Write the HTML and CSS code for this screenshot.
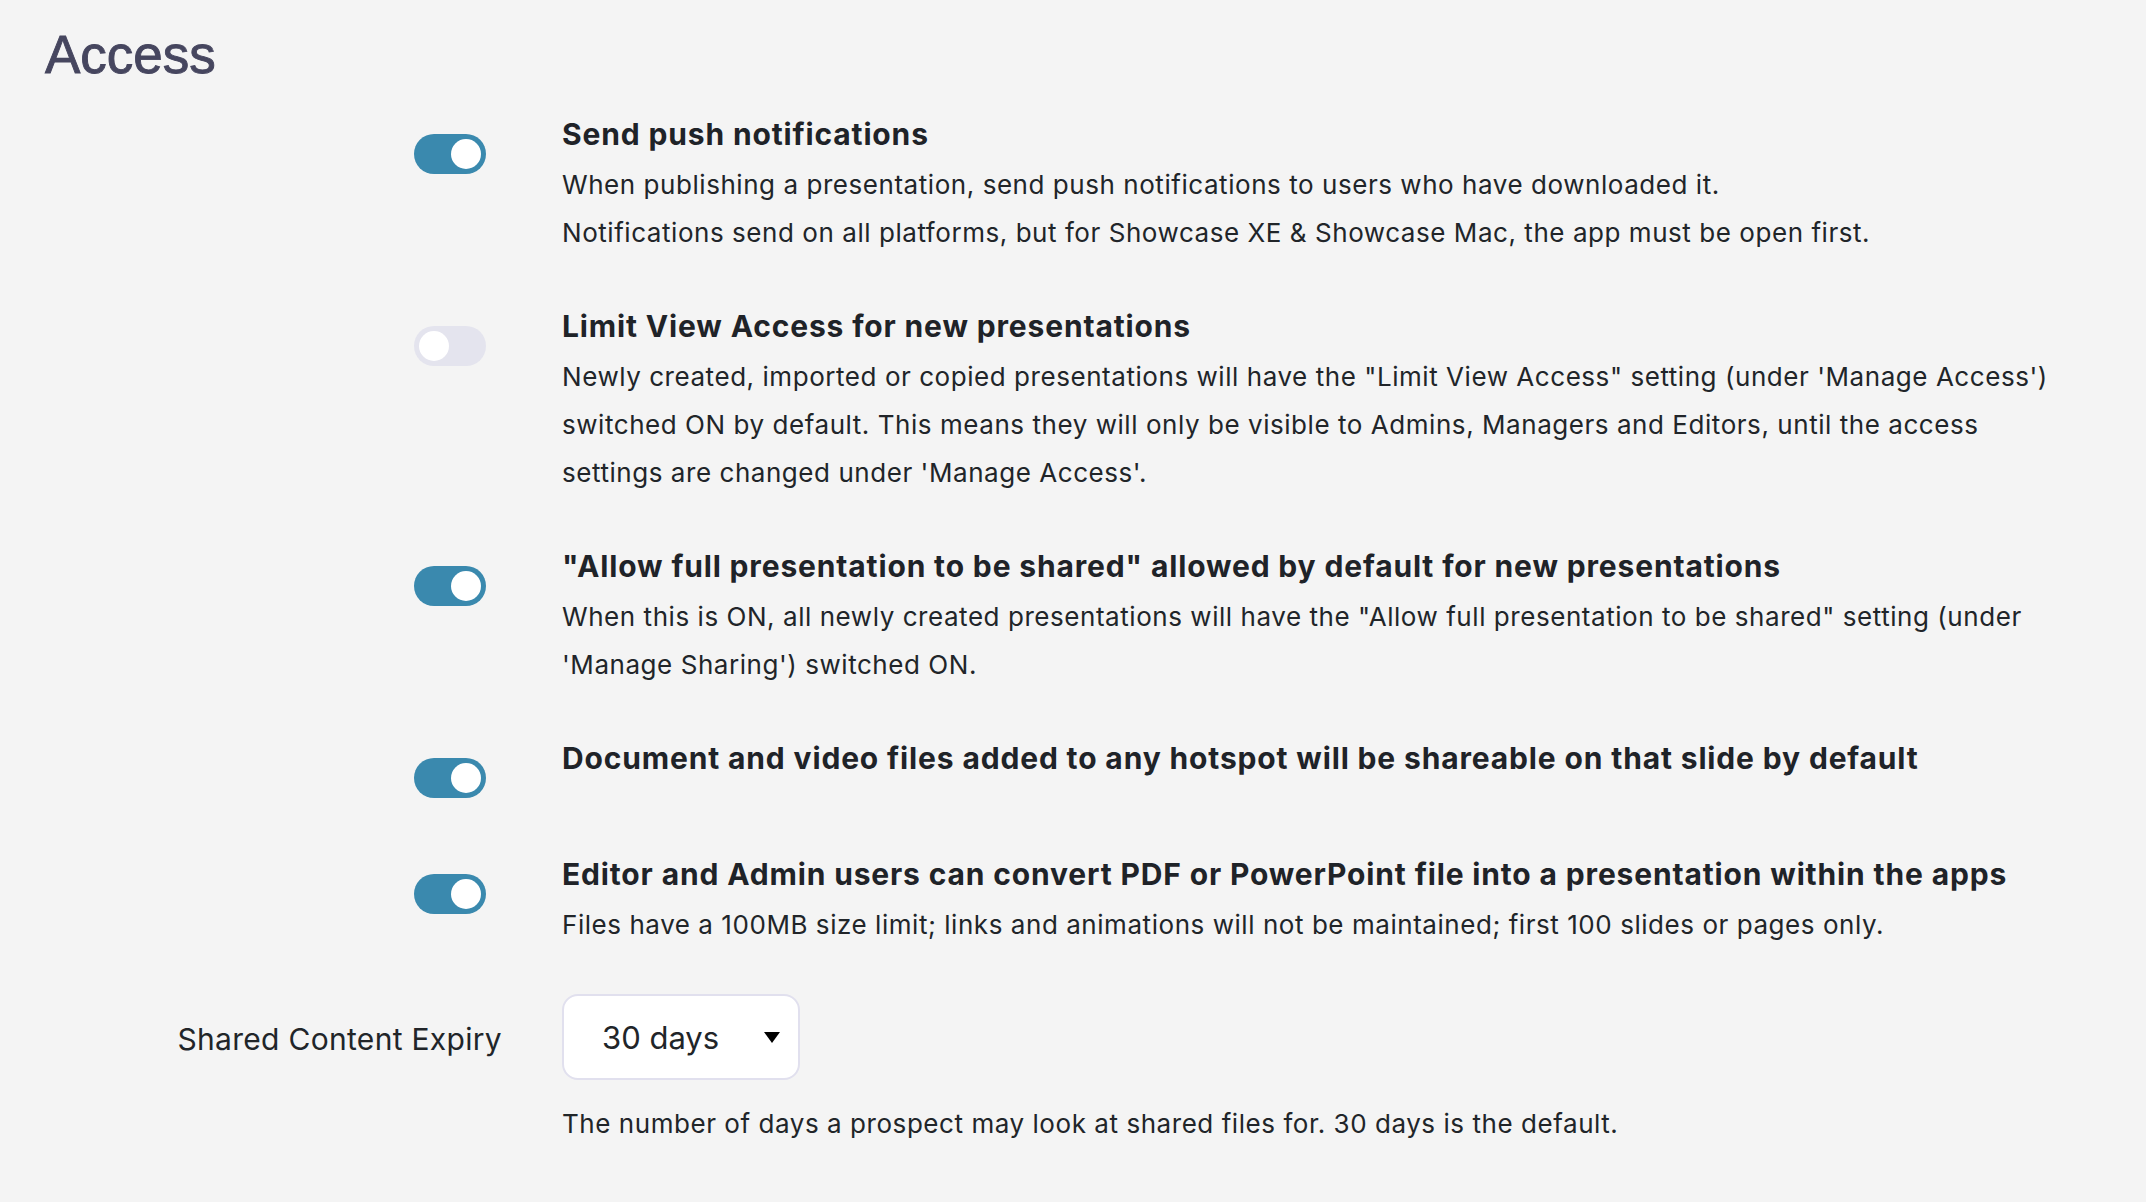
FILE: index.html
```html
<!DOCTYPE html>
<html lang="en">
<head>
<meta charset="utf-8">
<title>Access</title>
<link rel="stylesheet" href="styles.css">
</head>
<body>
<main class="page">
  <h1 class="title">Access</h1>
  <div class="settings">
    <div class="row">
      <div class="ctrl"><span class="toggle on"><span class="knob"></span></span></div>
      <div class="text">
        <h2 class="heading">Send push notifications</h2>
        <p class="desc">When publishing a presentation, send push notifications to users who have downloaded it.<br>Notifications send on all platforms, but for Showcase XE &amp; Showcase Mac, the app must be open first.</p>
      </div>
    </div>
    <div class="row">
      <div class="ctrl"><span class="toggle off"><span class="knob"></span></span></div>
      <div class="text">
        <h2 class="heading">Limit View Access for new presentations</h2>
        <p class="desc">Newly created, imported or copied presentations will have the "Limit View Access" setting (under 'Manage Access') switched ON by default. This means they will only be visible to Admins, Managers and Editors, until the access settings are changed under 'Manage Access'.</p>
      </div>
    </div>
    <div class="row">
      <div class="ctrl"><span class="toggle on"><span class="knob"></span></span></div>
      <div class="text">
        <h2 class="heading">"Allow full presentation to be shared" allowed by default for new presentations</h2>
        <p class="desc">When this is ON, all newly created presentations will have the "Allow full presentation to be shared" setting (under 'Manage Sharing') switched ON.</p>
      </div>
    </div>
    <div class="row row-short">
      <div class="ctrl"><span class="toggle on"><span class="knob"></span></span></div>
      <div class="text">
        <h2 class="heading">Document and video files added to any hotspot will be shareable on that slide by default</h2>
      </div>
    </div>
    <div class="row">
      <div class="ctrl"><span class="toggle on"><span class="knob"></span></span></div>
      <div class="text">
        <h2 class="heading">Editor and Admin users can convert PDF or PowerPoint file into a presentation within the apps</h2>
        <p class="desc">Files have a 100MB size limit; links and animations will not be maintained; first 100 slides or pages only.</p>
      </div>
    </div>
    <div class="row row-select">
      <div class="label-cell"><span class="label">Shared Content Expiry</span></div>
      <div class="text">
        <div class="select"><span class="select-value">30 days</span><span class="caret"></span></div>
        <p class="help">The number of days a prospect may look at shared files for. 30 days is the default.</p>
      </div>
    </div>
  </div>
</main>
</body>
</html>
```
FILE: styles.css
```css
html, body {
  margin: 0;
  padding: 0;
  background: #f4f4f4;
}

body {
  font-family: Inter, "Noto Sans", sans-serif;
  color: #212529;
}

.page {
  padding: 0 60px 0 45px;
}

.title {
  margin: 0;
  padding-top: 25px;
  font-family: "Liberation Sans", Arial, sans-serif;
  font-weight: 400;
  font-size: 53px;
  line-height: 60px;
  color: #46465f;
  -webkit-text-stroke: 0.9px #46465f;
}

.settings {
  padding-top: 25px;
  display: flex;
  flex-direction: column;
  gap: 45px;
}

.row {
  display: grid;
  grid-template-columns: 517px 1500px;
}

.ctrl {
  display: flex;
  justify-content: flex-end;
  padding-right: 76px;
  padding-top: 24px;
}

.row-short .ctrl {
  padding-bottom: 7px;
}

.toggle {
  position: relative;
  display: block;
  width: 72px;
  height: 40px;
  border-radius: 20px;
  box-sizing: border-box;
}

.toggle.on { background: #3a89ae; }
.toggle.off { background: #e4e4ee; }

.knob {
  position: absolute;
  top: 5px;
  width: 30px;
  height: 30px;
  border-radius: 50%;
  background: #ffffff;
}

.toggle.on .knob { right: 5px; }
.toggle.off .knob { left: 5px; }

.heading {
  margin: 0;
  padding-bottom: 3px;
  font-size: 30px;
  font-weight: 700;
  line-height: 48px;
  color: #1f2328;
  letter-spacing: 0.85px;
}

.desc, .help {
  margin: 0;
  font-size: 26px;
  font-weight: 400;
  line-height: 48px;
  letter-spacing: 0.55px;
  color: #212529;
}

.row-select {
  align-items: start;
}

.label-cell {
  height: 86px;
  padding-top: 4px;
  box-sizing: border-box;
  display: flex;
  align-items: center;
  justify-content: flex-end;
  padding-right: 60px;
}

.label {
  font-size: 30px;
  letter-spacing: 0.3px;
  color: #212529;
}

.select {
  width: 238px;
  height: 86px;
  box-sizing: border-box;
  border: 2px solid #e1e0ee;
  border-radius: 16px;
  background: #ffffff;
  display: flex;
  align-items: center;
  justify-content: space-between;
  padding: 0 18px 0 38px;
}

.select-value {
  font-size: 31px;
  color: #212529;
}

.caret {
  width: 0;
  height: 0;
  border-left: 8px solid transparent;
  border-right: 8px solid transparent;
  border-top: 11px solid #000000;
}

.help {
  margin-top: 20px;
}
```
